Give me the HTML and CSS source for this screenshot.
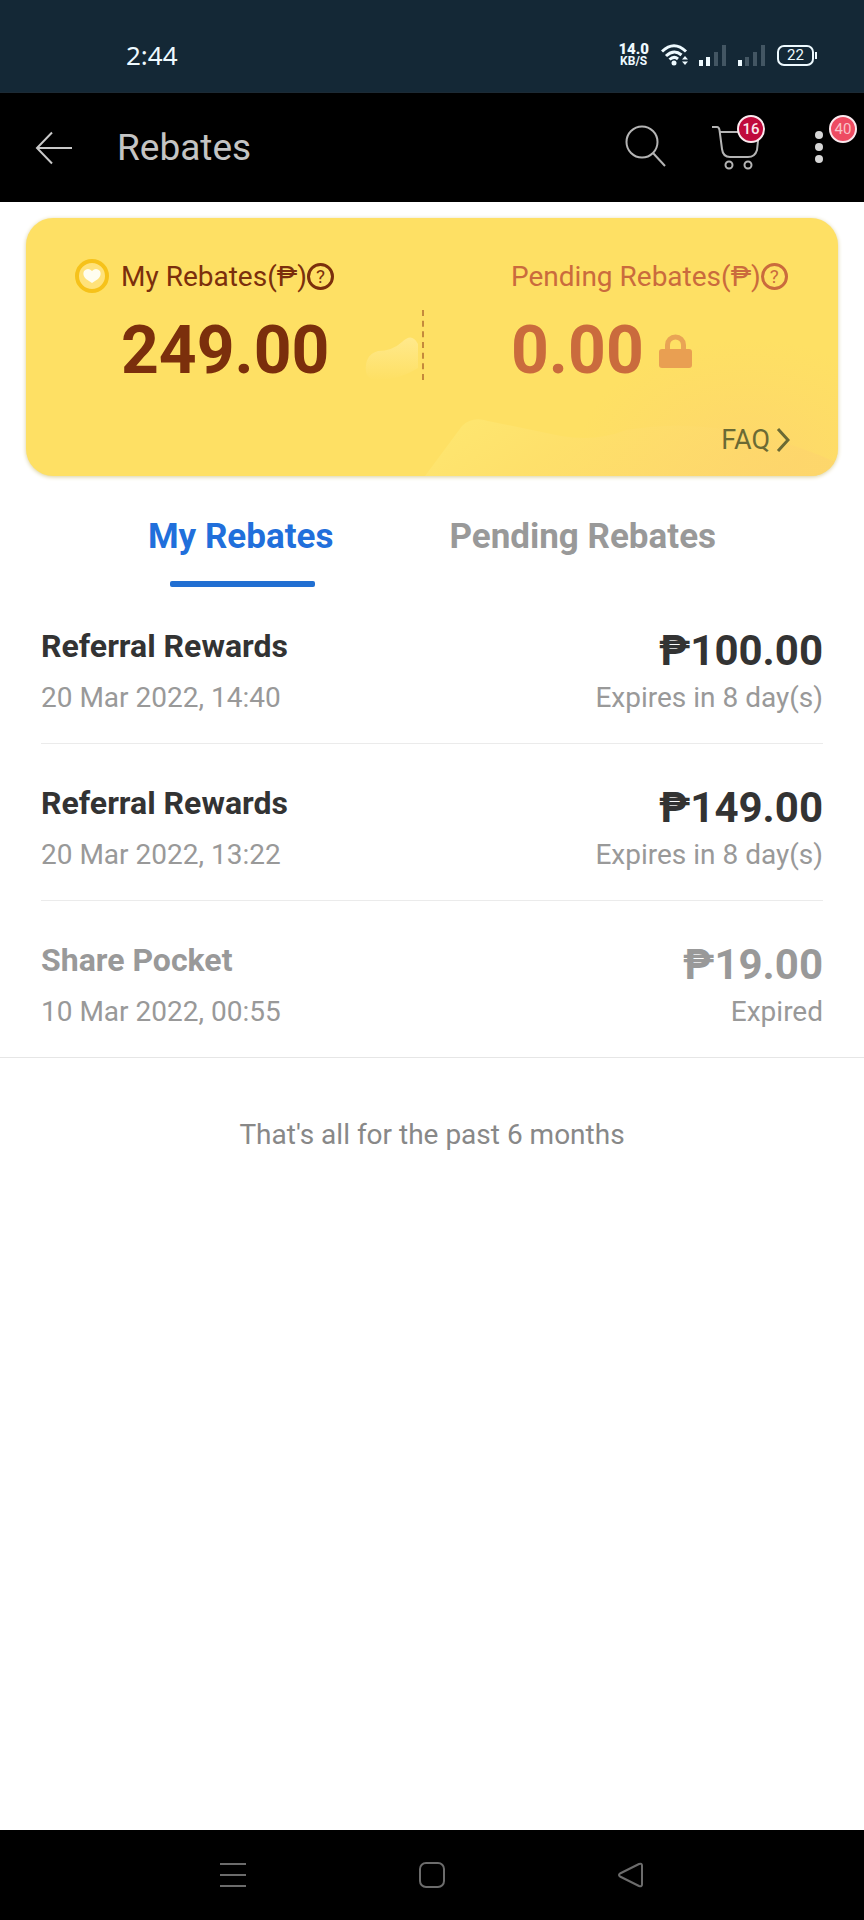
FILE: index.html
```html
<!DOCTYPE html>
<html lang="en">
<head>
<meta charset="UTF-8">
<meta name="viewport" content="width=device-width, initial-scale=1">
<title>Rebates</title>
<link rel="stylesheet" href="styles.css">
</head>
<body>

	<div class="status">
		<span class="time">2:44</span>
		<div class="status-icons">
			<div class="speed"><b>14.0</b><span>KB/S</span></div>
			<svg class="wifi" width="28" height="24" viewBox="0 0 28 24" fill="none" stroke="#eefaff" stroke-width="3">
				<path d="M1 8.500Q13 -3 25 8.500"/>
				<path d="M5 13Q13 5.500 20.500 12"/>
				<path d="M8.500 16.500Q13 12.500 17 16"/>
				<circle cx="13" cy="20" r="2.500" fill="#eefaff" stroke="none"/>
				<path d="M21 16.500L24 13L27 16.500ZM21 18.500L24 22L27 18.500Z" fill="#eefaff" stroke="none"/>
			</svg>
			<svg class="signal" width="27" height="24" viewBox="0 0 27 24" fill="#435663">
				<rect x="0" y="17" width="4" height="6" fill="#eefaff"/>
				<rect x="7" y="14" width="4" height="9" fill="#eefaff"/>
				<rect x="15" y="9" width="4" height="14"/>
				<rect x="23" y="2" width="4" height="21"/>
			</svg>
			<svg class="signal" width="27" height="24" viewBox="0 0 27 24" fill="#435663">
				<rect x="0" y="17" width="4" height="6" fill="#eefaff"/>
				<rect x="7" y="14" width="4" height="9"/>
				<rect x="15" y="9" width="4" height="14"/>
				<rect x="23" y="2" width="4" height="21"/>
			</svg>
			<div class="battery">22</div>
		</div>
	</div>

	<header class="topbar">
		<button class="icon-btn" aria-label="Back">
			<svg width="38" height="34" viewBox="0 0 38 34" fill="none" stroke="#c9c9c9" stroke-width="2">
				<path d="M17 1.500L2 17L17 32.500M2 17H37"/>
			</svg>
		</button>
		<h1 class="title">Rebates</h1>
		<div class="actions">
			<button class="icon-btn" aria-label="Search">
				<svg width="48" height="48" viewBox="0 0 48 48" fill="none" stroke="#b4b4b4" stroke-width="2">
					<circle cx="19" cy="18" r="15.500"/>
					<path d="M30 29L42 42"/>
				</svg>
			</button>
			<button class="icon-btn" aria-label="Cart">
				<svg width="56" height="48" viewBox="0 0 56 48" fill="none" stroke="#b4b4b4" stroke-width="2">
					<path d="M1 3H6Q8 3 8.500 6L11 25Q12 33 19 33H37Q44 33 46 26L48 8H9"/>
					<circle cx="18" cy="41" r="3.500"/>
					<circle cx="37" cy="41" r="3.500"/>
				</svg>
				<span class="badge">16</span>
			</button>
			<button class="icon-btn" aria-label="More">
				<svg width="24" height="48" viewBox="0 0 24 48" fill="#d6d6d6">
					<circle cx="12" cy="11" r="4"/>
					<circle cx="12" cy="23" r="4"/>
					<circle cx="12" cy="35" r="4"/>
				</svg>
				<span class="badge badge-more">40</span>
			</button>
		</div>
	</header>

	<main class="content">

		<section class="card">
			<!-- card background -->
			<svg class="card-bg" viewBox="0 0 812 258" preserveAspectRatio="none" aria-hidden="true">
				<defs>
					<linearGradient id="hill" x1="0" y1="0" x2="1" y2="0.200">
						<stop offset="0" stop-color="#fee974"/>
						<stop offset="0.400" stop-color="#fee06c"/>
						<stop offset="1" stop-color="#fdd56c"/>
					</linearGradient>
					<radialGradient id="glow">
						<stop offset="0" stop-color="#fdd270"/>
						<stop offset="1" stop-color="#fdd56c" stop-opacity="0"/>
					</radialGradient>
					<linearGradient id="cloud" x1="0" y1="0" x2="0" y2="1">
						<stop offset="0" stop-color="#ffe98c"/>
						<stop offset="1" stop-color="#fee064"/>
					</linearGradient>
				</defs>
				<ellipse cx="720" cy="240" rx="170" ry="120" fill="url(#glow)" opacity="0.700"/>
				<path d="M399 258L436 208Q446 198 462 203L535 218Q570 224 600 212Q700 195 812 245V258Z" fill="url(#hill)" opacity="0.800"/>
				<path d="M340 154Q338 137 352 133Q366 133 376 124Q386 114 392 126V150Q372 163 348 162Q341 160 340 154Z" fill="url(#cloud)"/>
			</svg>

			<div class="balance">
				<div class="balance-label">
					<svg class="coin" width="34" height="34" viewBox="0 0 34 34">
						<circle cx="17" cy="17" r="15" fill="#ffe27a" stroke="#f6c21a" stroke-width="4"/>
						<path d="M17 24L11 20Q7 16 9 12Q13 8 17 12Q21 8 25 12Q27 16 23 20Z" fill="#fffdf0"/>
					</svg>
					<span>My Rebates(₱)</span>
					<button class="help" aria-label="About my rebates">?</button>
				</div>
				<div class="balance-value">249.00</div>
			</div>
			<div class="divider"></div>
			<div class="balance pending">
				<div class="balance-label">
					<span>Pending Rebates(₱)</span>
					<button class="help" aria-label="About pending rebates">?</button>
				</div>
				<div class="balance-value">0.00
					<svg class="lock" width="33" height="34" viewBox="0 0 33 34">
						<path d="M8.500 16V11A8 8 0 0 1 24.500 11V16" fill="none" stroke="#e9a455" stroke-width="5"/>
						<rect x="0" y="15" width="33" height="19" rx="3" fill="#e99f52"/>
					</svg>
				</div>
			</div>
			<a class="faq" href="#">FAQ
				<svg width="14" height="26" viewBox="0 0 14 26" fill="none" stroke="#6b6a34" stroke-width="3">
					<path d="M2 2L12 13L2 24"/>
				</svg>
			</a>
		</section>

		<div class="tabs" role="tablist">
			<button class="tab active" role="tab" aria-selected="true">My Rebates</button>
			<button class="tab" role="tab" aria-selected="false">Pending Rebates</button>
		</div>

		<ul class="list">
			<li class="item">
				<div class="item-left">
					<h2 class="item-name">Referral Rewards</h2>
					<span class="item-note">20 Mar 2022, 14:40</span>
				</div>
				<div class="item-right">
					<b class="item-amount">₱100.00</b>
					<span class="item-note">Expires in 8 day(s)</span>
				</div>
			</li>
			<li class="item">
				<div class="item-left">
					<h2 class="item-name">Referral Rewards</h2>
					<span class="item-note">20 Mar 2022, 13:22</span>
				</div>
				<div class="item-right">
					<b class="item-amount">₱149.00</b>
					<span class="item-note">Expires in 8 day(s)</span>
				</div>
			</li>
			<li class="item expired">
				<div class="item-left">
					<h2 class="item-name">Share Pocket</h2>
					<span class="item-note">10 Mar 2022, 00:55</span>
				</div>
				<div class="item-right">
					<b class="item-amount">₱19.00</b>
					<span class="item-note">Expired</span>
				</div>
			</li>
		</ul>

		<p class="end">That's all for the past 6 months</p>
	</main>

	<nav class="navbar">
		<button class="icon-btn" aria-label="Menu">
			<svg width="28" height="28" viewBox="0 0 28 28" fill="none" stroke="#6c6c6c" stroke-width="2">
				<path d="M1 3H27M1 14H27M1 25H27"/>
			</svg>
		</button>
		<button class="icon-btn" aria-label="Home">
			<svg width="28" height="28" viewBox="0 0 28 28" fill="none" stroke="#6c6c6c" stroke-width="2">
				<rect x="2" y="2" width="24" height="24" rx="6"/>
			</svg>
		</button>
		<button class="icon-btn" aria-label="Back">
			<svg width="28" height="28" viewBox="0 0 28 28" fill="none" stroke="#6c6c6c" stroke-width="2" stroke-linejoin="round">
				<path d="M3 12.500L22 3Q25 2 25 4.500V23.500Q25 26 22 25L3 15.500Q1 14 3 12.500Z"/>
			</svg>
		</button>
	</nav>

</body>
</html>
```

FILE: styles.css
```css
*{
	box-sizing : border-box;
}
body, h1, h2, p, ul{
	margin : 0;
	padding : 0;
}
body{
	display : flex;
	flex-direction : column;
	min-height : 100vh;
	background-color : #fff;
	color : #333;
	font-family : Roboto, "Noto Sans", sans-serif;
}
button{
	padding : 0;
	border : 0;
	background : none;
	color : inherit;
	font-family : inherit;
	cursor : pointer;
}
svg{
	display : block;
}

/* status bar */
.status{
	display : flex;
	justify-content : space-between;
	align-items : center;
	height : 92px;
	padding : 18px 50px 0 126px;
	background-color : #142836;
	color : #eefaff;
}
.time{
	font-family : "Noto Sans", sans-serif;
	font-size : 26px;
}
.status-icons{
	display : flex;
	align-items : center;
	gap : 12px;
}
.speed{
	display : flex;
	flex-direction : column;
	align-items : center;
	font-weight : bold;
	font-size : 12px;
	line-height : 11px;
}
.speed b{
	font-size : 15px;
	line-height : 13px;
}
.wifi{
	margin-right : -2px;
}
.battery{
	position : relative;
	width : 37px;
	height : 21px;
	border : 2px solid #eefaff;
	border-radius : 7px;
	font-size : 15px;
	line-height : 17px;
	text-align : center;
}
.battery::after{
	content : "";
	position : absolute;
	top : 5px;
	right : -5px;
	width : 2px;
	height : 7px;
	background-color : #eefaff;
}

/* top bar */
.topbar{
	display : flex;
	align-items : center;
	height : 110px;
	padding : 0 33px 0 35px;
	border-top : 1px solid #1c2a35;
	background-color : #000;
}
.icon-btn{
	position : relative;
}
.title{
	margin-left : 44px;
	color : #c4c4c4;
	font-weight : normal;
	font-size : 37px;
	line-height : 44px;
}
.actions{
	display : flex;
	gap : 40px;
	margin-left : auto;
}
.badge{
	position : absolute;
	top : -9px;
	left : 26px;
	width : 28px;
	height : 28px;
	border : 2px solid #fbe9ee;
	border-radius : 50%;
	background-color : #c00a3c;
	color : #fbe9ee;
	font-weight : 500;
	font-size : 15px;
	line-height : 24px;
	text-align : center;
}
.badge-more{
	left : 22px;
	background-color : #ee4b62;
	color : #f9c3c9;
	font-weight : normal;
}

.content{
	flex : 1;
}

/* balance card */
.card{
	position : relative;
	display : grid;
	grid-template-columns : 348px 1px 1fr;
	margin : 16px 26px 0;
	padding : 40px 48px 20px;
	border-radius : 27px;
	background-color : #fee064;
	box-shadow : 0 1px 4px #d9cf9c;
	overflow : hidden;
}
.card > *{
	position : relative;
}
.card .card-bg{
	position : absolute;
	width : 100%;
	height : 100%;
}
.balance{
	padding-left : 47px;
	color : #7b2f0c;
}
.pending{
	padding-left : 88px;
	color : #ca6b3d;
}
.balance-label{
	display : flex;
	align-items : center;
	height : 36px;
	font-size : 28px;
	white-space : nowrap;
}
.coin{
	margin : 0 12px 0 -46px;
}
.help{
	width : 27px;
	height : 27px;
	border : 3px solid currentColor;
	border-radius : 50%;
	font-size : 19px;
	line-height : 21px;
}
.balance-value{
	display : flex;
	align-items : center;
	gap : 15px;
	height : 78px;
	margin-top : 17px;
	font-weight : bold;
	font-size : 66px;
}
.lock{
	margin-top : 2px;
}
.divider{
	height : 70px;
	margin-top : 52px;
	border-left : 2px dashed #c58a3c;
}
.faq{
	grid-column : 1 / -1;
	justify-self : end;
	display : flex;
	align-items : center;
	gap : 6px;
	margin-top : 35px;
	color : #6b6a34;
	font-size : 27px;
	line-height : 32px;
	text-decoration : none;
}

/* tabs */
.tabs{
	display : flex;
	justify-content : center;
	gap : 116px;
	padding-top : 40px;
}
.tab{
	position : relative;
	height : 71px;
	padding-bottom : 29px;
	color : #999;
	font-weight : bold;
	font-size : 35px;
	line-height : 40px;
}
.active{
	color : #216fdb;
}
.active::after{
	content : "";
	position : absolute;
	bottom : 0;
	left : 22px;
	right : 18px;
	height : 6px;
	border-radius : 2px;
	background-color : #216fd2;
}

/* rebate list */
.list{
	list-style-type : none;
	border-bottom : 1px solid #e6e6e6;
}
.item{
	display : flex;
	justify-content : space-between;
	margin : 0 41px;
	padding : 40px 0 29px;
	border-bottom : 1px solid #ebebeb;
}
.item:last-child{
	border-bottom : 0;
}
.item-left, .item-right{
	display : flex;
	flex-direction : column;
	gap : 17px;
}
.item-right{
	gap : 7px;
	text-align : right;
}
.item-name{
	font-size : 32px;
	line-height : 38px;
}
.item-amount{
	font-size : 42px;
	line-height : 48px;
}
.item-note{
	color : #999;
	font-size : 28px;
	line-height : 32px;
}
.expired{
	color : #999;
}
.end{
	padding : 61px 40px;
	color : #888;
	font-size : 28px;
	line-height : 32px;
	text-align : center;
}

/* navigation */
.navbar{
	display : grid;
	grid-template-columns : repeat(3, 1fr);
	justify-items : center;
	align-items : center;
	height : 90px;
	padding : 0 134px;
	background-color : #000;
}
```
